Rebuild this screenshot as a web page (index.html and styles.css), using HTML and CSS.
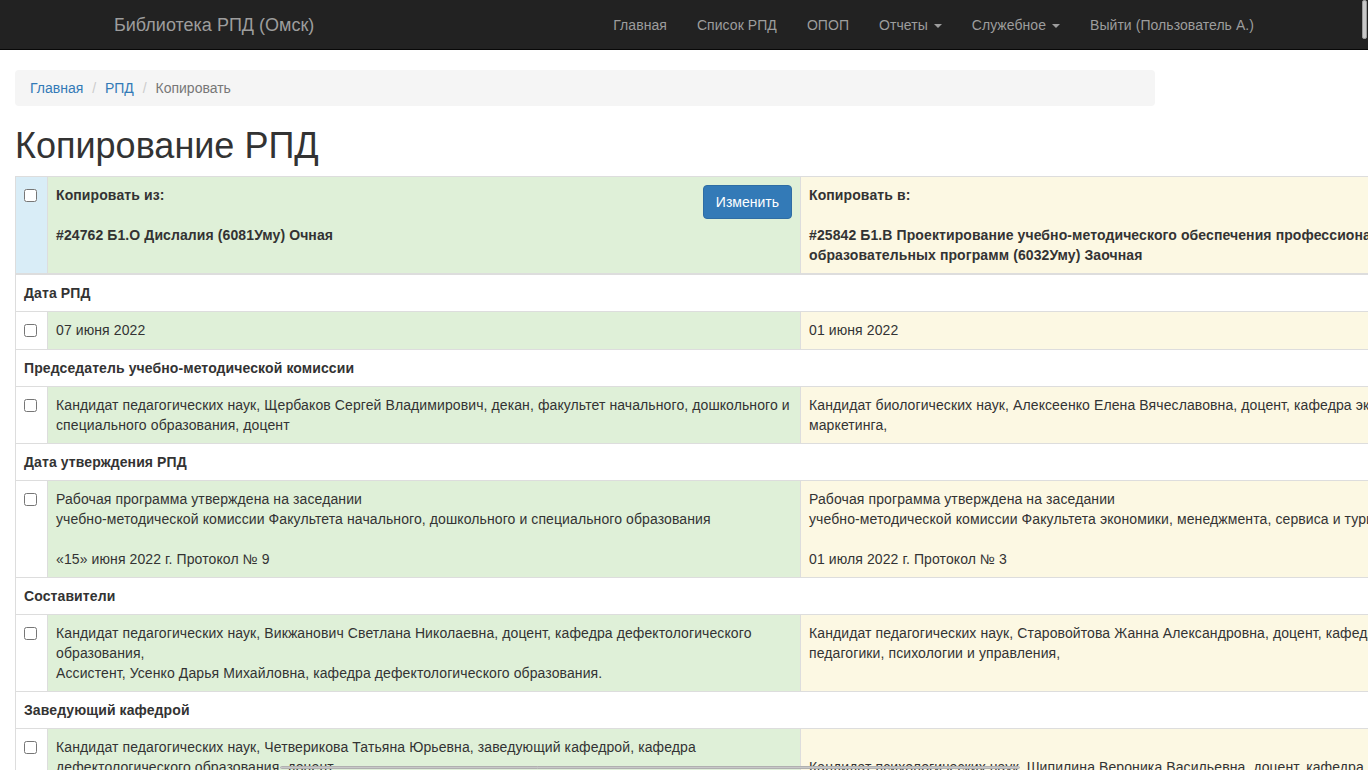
FILE: index.html
```html
<!DOCTYPE html>
<html lang="ru">
<head>
<meta charset="utf-8">
<title>Копирование РПД</title>
<link rel="stylesheet" href="styles.css">
</head>
<body>
<nav class="navbar">
  <div class="nav-container">
    <a class="brand" href="#">Библиотека РПД (Омск)</a>
    <ul class="nav">
      <li><a href="#">Главная</a></li>
      <li><a href="#">Список РПД</a></li>
      <li><a href="#">ОПОП</a></li>
      <li><a href="#">Отчеты <span class="caret"></span></a></li>
      <li><a href="#">Служебное <span class="caret"></span></a></li>
      <li><a href="#">Выйти (Пользователь А.)</a></li>
    </ul>
  </div>
</nav>

<div class="container">
  <ol class="breadcrumb">
    <li><a href="#">Главная</a></li>
    <li><a href="#">РПД</a></li>
    <li class="active">Копировать</li>
  </ol>

  <h1>Копирование РПД</h1>

  <table class="copy-table">
    <colgroup>
      <col class="c0">
      <col class="c1">
      <col class="c2">
    </colgroup>
    <thead>
      <tr>
        <th class="info"><input type="checkbox"></th>
        <th class="success">
          <button class="btn btn-primary">Изменить</button>
          Копировать из:<br><br>#24762 Б1.О Дислалия (6081Уму) Очная
        </th>
        <th class="warning">Копировать в:<br><br>#25842 Б1.В Проектирование учебно-методического обеспечения профессиональных образовательных программ (6032Уму) Заочная</th>
      </tr>
    </thead>
    <tbody>
      <tr class="section"><td colspan="3">Дата РПД</td></tr>
      <tr>
        <td><input type="checkbox"></td>
        <td class="success">07 июня 2022</td>
        <td class="warning">01 июня 2022</td>
      </tr>

      <tr class="section"><td colspan="3">Председатель учебно-методической комиссии</td></tr>
      <tr>
        <td><input type="checkbox"></td>
        <td class="success">Кандидат педагогических наук, Щербаков Сергей Владимирович, декан, факультет начального, дошкольного и специального образования, доцент</td>
        <td class="warning">Кандидат биологических наук, Алексеенко Елена Вячеславовна, доцент, кафедра экономики и маркетинга,</td>
      </tr>

      <tr class="section"><td colspan="3">Дата утверждения РПД</td></tr>
      <tr>
        <td><input type="checkbox"></td>
        <td class="success">Рабочая программа утверждена на заседании<br>учебно-методической комиссии Факультета начального, дошкольного и специального образования<br><br>«15» июня 2022 г. Протокол № 9</td>
        <td class="warning">Рабочая программа утверждена на заседании<br>учебно-методической комиссии Факультета экономики, менеджмента, сервиса и туризма<br><br>01 июля 2022 г. Протокол № 3</td>
      </tr>

      <tr class="section"><td colspan="3">Составители</td></tr>
      <tr>
        <td><input type="checkbox"></td>
        <td class="success">Кандидат педагогических наук, Викжанович Светлана Николаевна, доцент, кафедра дефектологического образования,<br>Ассистент, Усенко Дарья Михайловна, кафедра дефектологического образования.</td>
        <td class="warning">Кандидат педагогических наук, Старовойтова Жанна Александровна, доцент, кафедра общей педагогики, психологии и управления,</td>
      </tr>

      <tr class="section"><td colspan="3">Заведующий кафедрой</td></tr>
      <tr>
        <td><input type="checkbox"></td>
        <td class="success">Кандидат педагогических наук, Четверикова Татьяна Юрьевна, заведующий кафедрой, кафедра дефектологического образования, доцент</td>
        <td class="warning"><br>Кандидат психологических наук, Шипилина Вероника Васильевна, доцент, кафедра педагогики, психологии и управления</td>
      </tr>
    </tbody>
  </table>
</div>

<div class="scroll-thumb scroll-v" aria-hidden="true"></div>
<div class="scroll-thumb scroll-h" aria-hidden="true"></div>
</body>
</html>
```

FILE: styles.css
```css
* {
  box-sizing: border-box;
}

html,
body {
  overflow: hidden;
}

body {
  margin: 0;
  font-family: "Liberation Sans", Arial, Helvetica, sans-serif;
  font-size: 14px;
  line-height: 20px;
  color: #333;
  background: #fff;
}

a {
  text-decoration: none;
}

/* ---------- navbar ---------- */
.navbar {
  background: #222;
  border-bottom: 1px solid #080808;
  margin-bottom: 20px;
}

.nav-container {
  width: 1170px;
  height: 49px;
  margin: 0 auto;
  padding: 0 15px;
  display: flex;
  justify-content: space-between;
}

.brand {
  display: block;
  margin-left: -15px;
  padding: 15px;
  font-size: 18px;
  line-height: 20px;
  color: #9d9d9d;
}

.nav {
  display: flex;
  list-style: none;
  margin: 0 -15px 0 0;
  padding: 0;
  letter-spacing: 0.06px;
}

.nav a {
  display: block;
  padding: 15px;
  line-height: 20px;
  color: #9d9d9d;
}

.caret {
  display: inline-block;
  width: 0;
  height: 0;
  margin-left: 2px;
  vertical-align: middle;
  border-top: 4px solid;
  border-right: 4px solid transparent;
  border-left: 4px solid transparent;
}

/* ---------- content ---------- */
.container {
  width: 1170px;
  padding: 0 15px;
}

.breadcrumb {
  list-style: none;
  margin: 0 0 20px;
  padding: 8px 15px;
  background: #f5f5f5;
  border-radius: 4px;
}

.breadcrumb li {
  display: inline-block;
}

.breadcrumb a {
  color: #337ab7;
}

.breadcrumb li + li::before {
  content: "/\00a0";
  padding: 0 5px;
  color: #ccc;
}

.breadcrumb .active {
  color: #777;
}

h1 {
  margin: 20px 0 10px;
  font-size: 36px;
  font-weight: 500;
  line-height: 1.1;
}

/* ---------- table ---------- */
.copy-table {
  table-layout: fixed;
  border-collapse: collapse;
  border-spacing: 0;
  width: 1485px;
  margin-bottom: 20px;
  letter-spacing: 0.1px;
}

.c0 { width: 32px; }
.c1 { width: 753px; }
.c2 { width: 700px; }

.copy-table th,
.copy-table td {
  border: 1px solid #ddd;
  padding: 8px;
  line-height: 20px;
  text-align: left;
  vertical-align: top;
}

.copy-table th {
  font-weight: bold;
  border-bottom-width: 2px;
}

.copy-table .section td {
  font-weight: bold;
}

.info { background: #d9edf7; }
.success { background: #dff0d8; }
.warning { background: #fcf8e3; }

input[type="checkbox"] {
  display: block;
  width: 13px;
  height: 13px;
  margin: 4px 0;
}

.btn {
  float: right;
  padding: 6px 12px;
  font-family: inherit;
  font-size: 14px;
  line-height: 20px;
  letter-spacing: 0;
  border: 1px solid transparent;
  border-radius: 4px;
  cursor: pointer;
}

.btn-primary {
  color: #fff;
  background: #337ab7;
  border-color: #2e6da4;
}

/* overlay scrollbar thumbs, as in the screenshot */
.scroll-thumb {
  position: fixed;
  background: #c8c8c8;
  border: 1px solid #9a9a9a;
  border-radius: 2px;
}

.scroll-v {
  top: 0;
  right: 1px;
  width: 5px;
  height: 39px;
}

.scroll-h {
  bottom: 1px;
  left: 280px;
  width: 740px;
  height: 3px;
  border-color: #b0b0b0;
}
```
